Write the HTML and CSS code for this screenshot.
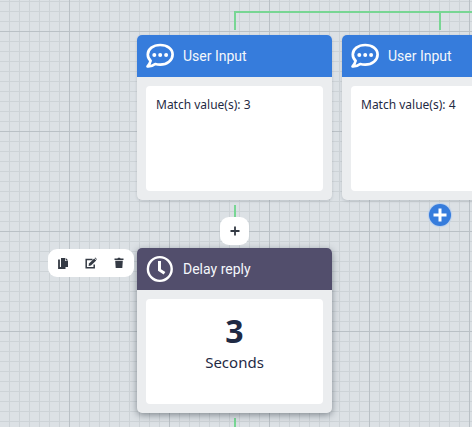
FILE: index.html
```
<!DOCTYPE html>
<html lang="en">
<head>
    <meta charset="utf-8">
    <meta name="viewport" content="width=device-width, initial-scale=1">
    <title>Flow Builder</title>
    <link rel="stylesheet" href="styles.css">
</head>
<body>
    <!-- shared icons -->
    <svg class="sprite" aria-hidden="true">
        <symbol id="icon-comment" viewBox="0 0 28 26">
            <path d="M14.200 2C7.200 2 1.800 6 1.800 11.500c0 2.500 1 4.600 2.800 6.300-.4 2-1.500 3.900-3 5.600 2.900.2 5.500-.7 7.600-2.400 1.600.5 3.200.7 5 .7 6.900 0 12.400-4.300 12.400-10.200S21.100 2 14.200 2z" fill="none" stroke="#fff" stroke-width="2.700" stroke-linejoin="round"/>
            <circle cx="8.300" cy="12" r="2" fill="#fff"/>
            <circle cx="14.200" cy="12" r="2" fill="#fff"/>
            <circle cx="20.100" cy="12" r="2" fill="#fff"/>
        </symbol>
    </svg>

    <main class="canvas">
        <div class="line line-top"></div>
        <div class="line line-a"></div>
        <div class="line line-b"></div>
        <div class="line line-mid"></div>
        <div class="line line-end"></div>

        <section class="node node-a">
            <header class="node-header">
                <svg class="node-icon"><use href="#icon-comment"/></svg>
                <h2>User Input</h2>
            </header>
            <div class="node-body">
                <p>Match value(s): 3</p>
            </div>
        </section>

        <section class="node node-b">
            <header class="node-header">
                <svg class="node-icon"><use href="#icon-comment"/></svg>
                <h2>User Input</h2>
            </header>
            <div class="node-body">
                <p>Match value(s): 4</p>
            </div>
        </section>

        <section class="node node-delay selected">
            <header class="node-header">
                <svg class="node-icon" viewBox="0 0 28 26">
                    <circle cx="13.800" cy="13" r="11.900" fill="none" stroke="#fff" stroke-width="2.400"/>
                    <path d="M13.500 5v9l5 3.300" fill="none" stroke="#fff" stroke-width="3"/>
                </svg>
                <h2>Delay reply</h2>
            </header>
            <div class="node-body center">
                <strong>3</strong>
                <span>Seconds</span>
            </div>
        </section>

        <div class="toolbar">
            <button type="button" aria-label="Copy">
                <svg viewBox="0 0 12 12">
                    <path d="M4 1h4v3h3v6H4z" fill="#343a44"/>
                    <path d="M8.600.8 11.200 3.400H8.600z" fill="#343a44"/>
                    <path d="M2 2.500v8.500h6.500" fill="none" stroke="#343a44" stroke-width="1.800"/>
                </svg>
            </button>
            <button type="button" aria-label="Edit">
                <svg viewBox="0 0 12 12">
                    <path d="M7.500 2.500H1.200v8.300h8V7.500" fill="none" stroke="#343a44" stroke-width="1.500"/>
                    <path d="M4 6.600 9.200 1.400l2 2L6 8.600 3.600 9z" fill="#343a44"/>
                    <path d="M9.700 1.100l.6-.6 1.700 1.700-.6.600z" fill="#343a44"/>
                </svg>
            </button>
            <button type="button" aria-label="Delete">
                <svg viewBox="0 0 12 12">
                    <path d="M1.500 1.500h3L5 .8h2l.5.700h3v1.500h-9zM2.200 3.700h7.600L9.300 11H2.700z" fill="#343a44"/>
                </svg>
            </button>
        </div>

        <button type="button" class="insert" aria-label="Insert step">
            <svg viewBox="0 0 10 10"><path d="M5 .5v9M.5 5h9" stroke="#343a44" stroke-width="1.800"/></svg>
        </button>
        <button type="button" class="add" aria-label="Add step">
            <svg viewBox="0 0 14 14"><path d="M7 .5v13M.5 7h13" stroke="#fff" stroke-width="3"/></svg>
        </button>
    </main>
</body>
</html>
```
FILE: styles.css
```
* {
    margin: 0;
    padding: 0;
    box-sizing: border-box;
}
body {
    font-family: "Noto Sans", "Open Sans", sans-serif;
    color: #1f2a44;
}
.sprite {
    position: absolute;
    width: 0;
    height: 0;
}
.canvas {
    position: relative;
    min-height: 100vh;
    overflow: hidden;
    background-color: #dce1e5;
    background-image:
        linear-gradient(90deg, #bac1c6 1px, transparent 1px),
        linear-gradient(#bac1c6 1px, transparent 1px),
        linear-gradient(90deg, #cdd3d7 1px, transparent 1px),
        linear-gradient(#cdd3d7 1px, transparent 1px);
    background-size: 100px 100px, 100px 100px, 10px 10px, 10px 10px;
    background-position: 69px 31px, 69px 31px, 9px 1px, 9px 1px;
}

/* connectors */
.line {
    position: absolute;
    width: 2px;
    background: #78d694;
}
.line-top {
    top: 11px;
    left: 234px;
    right: 0;
    width: auto;
    height: 2px;
}
.line-a {
    top: 11px;
    left: 234px;
    height: 19px;
}
.line-b {
    top: 11px;
    left: 439px;
    height: 19px;
}
.line-mid {
    top: 205px;
    left: 234px;
    height: 20px;
}
.line-end {
    top: 418px;
    left: 234px;
    bottom: 0;
}

/* nodes */
.node {
    position: absolute;
    width: 195px;
    padding-bottom: 9px;
    background: #ebedef;
    border-radius: 5px;
    box-shadow: 0 1px 3px rgba(60, 70, 80, 0.2);
}
.node-a {
    top: 35px;
    left: 137px;
}
.node-b {
    top: 35px;
    left: 342px;
}
.node-delay {
    top: 248px;
    left: 137px;
}
.selected {
    box-shadow: 0 2px 7px rgba(40, 50, 60, 0.5);
}
.node-header {
    display: flex;
    align-items: center;
    gap: 9px;
    height: 42px;
    padding: 0 9px;
    background: #367cdc;
    color: #f4f7fb;
    border-radius: 5px 5px 0 0;
}
.node-delay .node-header {
    background: #524e6c;
}
.node-icon {
    width: 28px;
    height: 26px;
    overflow: visible;
}
.node-header h2 {
    font-family: Roboto, sans-serif;
    font-size: 14px;
    font-weight: 400;
    line-height: 20px;
}
.node-body {
    height: 105px;
    margin: 9px 9px 0;
    padding: 10px;
    background: #fff;
    border-radius: 4px;
    font-size: 12px;
    line-height: 18px;
}
.center {
    display: flex;
    flex-direction: column;
    align-items: center;
    font-size: 15px;
}
.center strong {
    font-size: 32px;
    line-height: 44px;
}

/* buttons */
button {
    display: flex;
    align-items: center;
    justify-content: center;
    border: 0;
    background: none;
    cursor: pointer;
}
.toolbar {
    position: absolute;
    top: 249px;
    left: 48px;
    display: flex;
    padding: 0 1px;
    border-radius: 9px;
    background: #fff;
}
.toolbar button {
    width: 28px;
    height: 28px;
}
.toolbar svg {
    width: 12px;
    height: 12px;
}
.insert {
    position: absolute;
    top: 217px;
    left: 220px;
    width: 29px;
    height: 28px;
    border-radius: 9px;
    background: #fff;
}
.insert svg {
    width: 10px;
    height: 10px;
}
.add {
    position: absolute;
    top: 204px;
    left: 429px;
    width: 22px;
    height: 22px;
    border-radius: 50%;
    background: #367cdc;
    box-shadow: 0 0 1px 1px #b9d0ee;
}
.add svg {
    width: 14px;
    height: 14px;
}
```
